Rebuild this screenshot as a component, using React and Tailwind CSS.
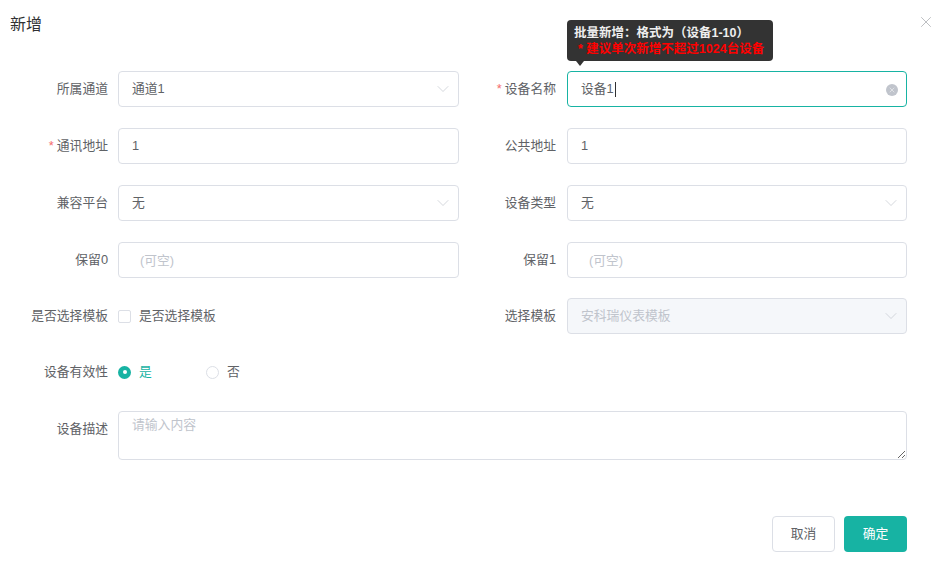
import React from 'react'
import { ChevronDown, X } from 'lucide-react'

const Label = ({ text, required, width, pr = 'pr-[10px]' }) => (
  <label className={`${width} ${pr} shrink-0 text-right text-[12.8px] leading-[36px] text-[#606266]`}>
    {required && <span className="mr-[3px] text-[#f56c6c]">*</span>}
    {text}
  </label>
)

const Select = ({ value, disabled }) => (
  <div className={`flex h-9 flex-1 items-center justify-between rounded-[4px] border border-[#dcdfe6] pl-[13px] pr-[5px] text-[12.8px] ${disabled ? 'bg-[#f5f7fa] text-[#c0c4cc]' : 'bg-white text-[#606266]'}`}>
    <span>{value}</span>
    <ChevronDown size={20} strokeWidth={0.8} className="text-[#c0c4cc]" />
  </div>
)

const Input = ({ value, placeholder }) => (
  <div className="flex h-9 flex-1 items-center rounded-[4px] border border-[#dcdfe6] bg-white px-[13px] text-[12.8px] text-[#606266]">
    {value}
    {placeholder && <span className="ml-[8px] mt-[1px] text-[#c0c4cc]">{placeholder}</span>}
  </div>
)

const Row = ({ children, className }) => (
  <div className={`grid grid-cols-[459px_448px] ${className}`}>{children}</div>
)

const Left = ({ children }) => <div className="flex">{children}</div>
const Right = ({ children }) => <div className="flex">{children}</div>

const App = () => {
  return (
    <div className="relative h-[563px] w-[944px] overflow-hidden bg-white font-['Liberation_Sans','Noto_Sans_CJK_SC',sans-serif]">
      {/* header */}
      <div className="flex h-[71px] items-start justify-between pl-[10px] pr-[9px]">
        <h2 className="mt-[13px] text-[16px] leading-[24px] text-[#303133]">新增</h2>
        <X size={18} strokeWidth={0.8} className="mt-[13px] text-[#909399]" />
      </div>

      <Row>
        <Left>
          <Label text="所属通道" width="w-[118px]" />
          <Select value="通道1" />
        </Left>
        <Right>
          <Label text="设备名称" required width="w-[108px]" pr="pr-[11px]" />
          <div className="relative flex h-9 flex-1 items-center rounded-[4px] border border-[#17b3a3] bg-white px-[13px] text-[12.8px] text-[#606266]">
            设备1
            <span className="ml-[1px] h-[15px] w-px bg-[#303133]"></span>
            <span className="absolute right-[8px] top-[12px] flex h-3 w-3 items-center justify-center rounded-full bg-[#c0c4cc]">
              <X size={8} strokeWidth={1.5} className="text-white" />
            </span>
          </div>
        </Right>
      </Row>

      <Row className="mt-[21px]">
        <Left>
          <Label text="通讯地址" required width="w-[118px]" />
          <Input value="1" />
        </Left>
        <Right>
          <Label text="公共地址" width="w-[108px]" pr="pr-[11px]" />
          <Input value="1" />
        </Right>
      </Row>

      <Row className="mt-[21px]">
        <Left>
          <Label text="兼容平台" width="w-[118px]" />
          <Select value="无" />
        </Left>
        <Right>
          <Label text="设备类型" width="w-[108px]" pr="pr-[11px]" />
          <Select value="无" />
        </Right>
      </Row>

      <Row className="mt-[21px]">
        <Left>
          <Label text="保留0" width="w-[118px]" />
          <Input placeholder="(可空)" />
        </Left>
        <Right>
          <Label text="保留1" width="w-[108px]" pr="pr-[11px]" />
          <Input placeholder="(可空)" />
        </Right>
      </Row>

      <Row className="mt-[20px]">
        <Left>
          <Label text="是否选择模板" width="w-[118px]" />
          <div className="flex h-9 items-center text-[12.8px] text-[#606266]">
            <span className="mr-[8px] h-[13px] w-[13px] rounded-[2px] border border-[#dcdfe6] bg-white"></span>
            是否选择模板
          </div>
        </Left>
        <Right>
          <Label text="选择模板" width="w-[108px]" pr="pr-[11px]" />
          <Select value="安科瑞仪表模板" disabled />
        </Right>
      </Row>

      <div className="mt-[20px] flex">
        <Label text="设备有效性" width="w-[118px]" />
        <div className="flex h-9 items-center text-[12.8px]">
          <span className="flex h-[13px] w-[13px] items-center justify-center rounded-full bg-[#17b3a3]">
            <span className="h-1 w-1 rounded-full bg-white"></span>
          </span>
          <span className="ml-[8px] w-[67px] text-[#17b3a3]">是</span>
          <span className="h-[13px] w-[13px] rounded-full border border-[#dcdfe6] bg-white"></span>
          <span className="ml-[8px] text-[#606266]">否</span>
        </div>
      </div>

      <div className="mt-[21px] flex pr-[37px]">
        <Label text="设备描述" width="w-[118px]" />
        <textarea
          readOnly
          placeholder="请输入内容"
          className="h-[49px] flex-1 rounded-[4px] border border-[#dcdfe6] bg-white px-[13px] py-[4px] text-[12.8px] leading-[18px] text-[#606266] outline-none placeholder:text-[#c0c4cc]"
        />
      </div>

      <div className="mt-[56px] flex justify-end gap-[9px] pr-[37px]">
        <button className="h-9 w-[63px] rounded-[4px] border border-[#dcdfe6] bg-white text-[12.8px] text-[#606266]">取消</button>
        <button className="h-9 w-[63px] rounded-[4px] bg-[#17b3a3] text-[12.8px] text-white">确定</button>
      </div>

      {/* tooltip above the device name field */}
      <div className="absolute left-[567px] top-[20px] h-[41px] w-[206px] rounded-[4px] bg-[#333333] px-[7px] pt-[5px] text-[12.5px] font-bold leading-[16px] text-[#eeeeee]">
        <div className="whitespace-nowrap">批量新增：格式为（设备1-10）</div>
        <div className="whitespace-nowrap pl-[4px] text-[#ff0000]">* 建议单次新增不超过1024台设备</div>
        <span className="absolute left-[9px] top-[41px] h-0 w-0 border-x-[4px] border-t-[5px] border-x-transparent border-t-[#333333]"></span>
      </div>
    </div>
  )
}

export default App
